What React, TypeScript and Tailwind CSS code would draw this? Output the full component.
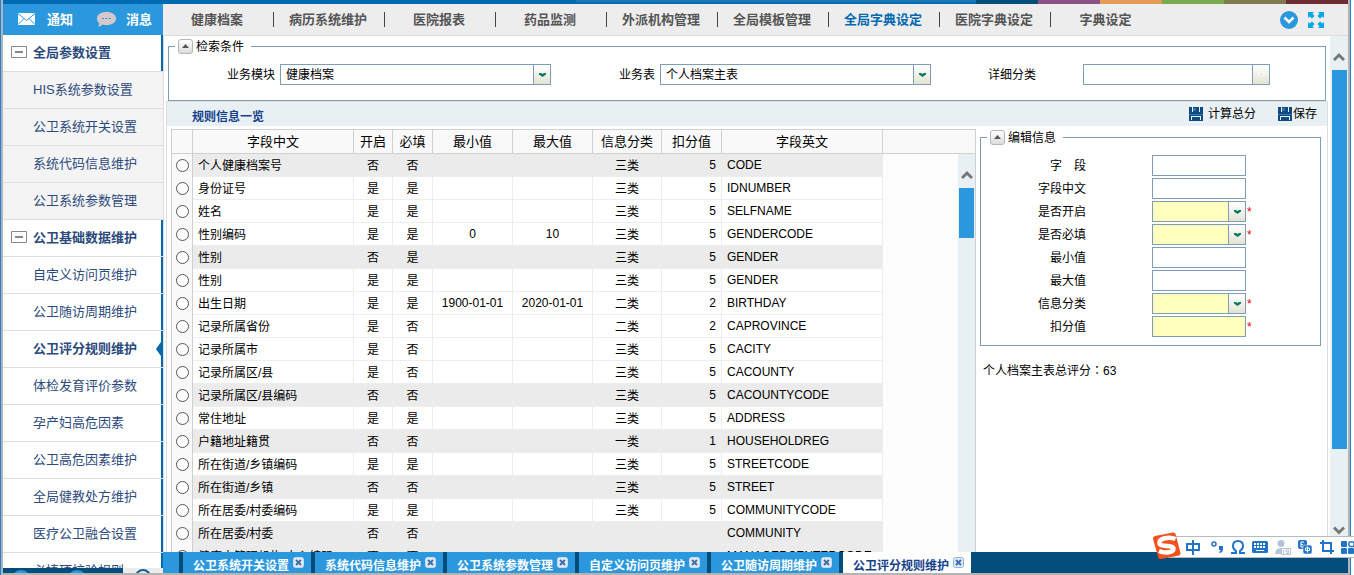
import { useState } from 'react';
import type { ReactNode } from 'react';

interface RuleRow {
  name: string;
  open: string;
  required: string;
  min?: string;
  max?: string;
  kind: string;
  score: string;
  code: string;
}

interface MenuItem {
  label: string;
  group?: boolean;
  light?: boolean;
  active?: boolean;
}

const rows: RuleRow[] = [
  { name: '个人健康档案号', open: '否', required: '否', kind: '三类', score: '5', code: 'CODE' },
  { name: '身份证号', open: '是', required: '是', kind: '三类', score: '5', code: 'IDNUMBER' },
  { name: '姓名', open: '是', required: '是', kind: '三类', score: '5', code: 'SELFNAME' },
  { name: '性别编码', open: '是', required: '是', min: '0', max: '10', kind: '三类', score: '5', code: 'GENDERCODE' },
  { name: '性别', open: '否', required: '是', kind: '三类', score: '5', code: 'GENDER' },
  { name: '性别', open: '是', required: '是', kind: '三类', score: '5', code: 'GENDER' },
  { name: '出生日期', open: '是', required: '是', min: '1900-01-01', max: '2020-01-01', kind: '二类', score: '2', code: 'BIRTHDAY' },
  { name: '记录所属省份', open: '是', required: '否', kind: '二类', score: '2', code: 'CAPROVINCE' },
  { name: '记录所属市', open: '是', required: '否', kind: '三类', score: '5', code: 'CACITY' },
  { name: '记录所属区/县', open: '是', required: '否', kind: '三类', score: '5', code: 'CACOUNTY' },
  { name: '记录所属区/县编码', open: '否', required: '否', kind: '三类', score: '5', code: 'CACOUNTYCODE' },
  { name: '常住地址', open: '是', required: '是', kind: '三类', score: '5', code: 'ADDRESS' },
  { name: '户籍地址籍贯', open: '否', required: '否', kind: '一类', score: '1', code: 'HOUSEHOLDREG' },
  { name: '所在街道/乡镇编码', open: '是', required: '是', kind: '三类', score: '5', code: 'STREETCODE' },
  { name: '所在街道/乡镇', open: '否', required: '否', kind: '三类', score: '5', code: 'STREET' },
  { name: '所在居委/村委编码', open: '是', required: '是', kind: '三类', score: '5', code: 'COMMUNITYCODE' },
  { name: '所在居委/村委', open: '否', required: '否', kind: '', score: '', code: 'COMMUNITY' },
  { name: '健康支管理机构/中心编码', open: '否', required: '否', kind: '', score: '', code: 'MANAGERCENTERCODE' },
];

const menu: MenuItem[] = [
  { label: '全局参数设置', group: true },
  { label: 'HIS系统参数设置', light: true },
  { label: '公卫系统开关设置', light: true },
  { label: '系统代码信息维护', light: true },
  { label: '公卫系统参数管理', light: true },
  { label: '公卫基础数据维护', group: true },
  { label: '自定义访问页维护' },
  { label: '公卫随访周期维护' },
  { label: '公卫评分规则维护', active: true },
  { label: '体检发育评价参数' },
  { label: '孕产妇高危因素' },
  { label: '公卫高危因素维护' },
  { label: '全局健教处方维护' },
  { label: '医疗公卫融合设置' },
  { label: '必填项校验规则' },
];

const navs = [
  '健康档案',
  '病历系统维护',
  '医院报表',
  '药品监测',
  '外派机构管理',
  '全局模板管理',
  '全局字典设定',
  '医院字典设定',
  '字典设定',
];

const tabs = [
  '公卫系统开关设置',
  '系统代码信息维护',
  '公卫系统参数管理',
  '自定义访问页维护',
  '公卫随访周期维护',
  '公卫评分规则维护',
];

const fields = [
  { id: 'field', label: '字　段' },
  { id: 'fieldCn', label: '字段中文' },
  { id: 'open', label: '是否开启', select: true, must: true },
  { id: 'required', label: '是否必填', select: true, must: true },
  { id: 'min', label: '最小值' },
  { id: 'max', label: '最大值' },
  { id: 'kind', label: '信息分类', select: true, must: true },
  { id: 'score', label: '扣分值', must: true },
];

const Combo = (props: {
  id: string;
  value?: string;
  className: string;
  disabled?: boolean;
}) => (
  <div className={`relative h-[21px] border border-[#7f9db9] ${props.className}`}>
    <select
      id={props.id}
      disabled={props.disabled}
      className="block h-full w-full appearance-none bg-transparent pl-[5px] pr-5 pt-0.5 text-xs leading-[17px] text-black outline-none"
    >
      <option>{props.value ?? ''}</option>
    </select>
    <span className="pointer-events-none absolute inset-y-0 right-0 flex w-[17px] items-center justify-center border-l border-[#7f9db9] bg-gradient-to-b from-white to-[#e3e3d3]">
      {props.disabled ? (
        <svg width="9" height="6" viewBox="0 0 9 6" fill="#e6e4d4" stroke="#fff">
          <path d="M1 1h7L4.500 4.500z" />
        </svg>
      ) : (
        <svg width="7" height="4" viewBox="0 0 7 4" fill="#007a66">
          <path d="M0 0h2l1.500 1L5 0h2v1.500L3.500 4 0 1.500z" />
        </svg>
      )}
    </span>
  </div>
);

const PanelLegend = (props: { children: ReactNode }) => (
  <legend className="ml-1.5 px-[3px]">
    <span className="flex h-4 items-center gap-[3px] pr-1">
      <button
        type="button"
        aria-label="收起"
        className="flex h-[15px] w-[15px] items-center justify-center rounded-[3px] border border-[#b5b5b5] bg-gradient-to-b from-white to-[#dcdcdc]"
      >
        <svg width="7" height="4" viewBox="0 0 7 4" fill="#555">
          <path d="M3.500 0L7 4H0z" />
        </svg>
      </button>
      <span className="pt-0.5">{props.children}</span>
    </span>
  </legend>
);

const SaveIcon = () => (
  <svg width="14" height="14" viewBox="0 0 14 14">
    <path d="M0 0h14v14H0z" fill="#0f4a80" />
    <path d="M3 0h1v5H3zM10 0h1v5h-1z" fill="#e8f0f3" />
    <path d="M4 1h3v3H4z" fill="#2d78b4" />
    <path d="M0 7h14v1H0z" fill="#3d76a5" />
    <path d="M2 9h10v1H2zM2 10h1v3H2zM11 10h1v3h-1z" fill="#e8f0f3" />
  </svg>
);

const Arrow = (props: { down?: boolean }) => (
  <svg width="12" height="10" viewBox="0 0 12 10" fill="none" stroke="#777" strokeWidth="3">
    <path d={props.down ? 'M1 1.500l5 5 5-5' : 'M1 8l5-5 5 5'} />
  </svg>
);

const Sidebar = () => (
  <aside className="flex w-40 shrink-0 flex-col">
    <div className="flex h-[31px] shrink-0 items-center bg-[#2b98dd] text-[13px] font-bold text-white">
      <button type="button" className="flex items-center gap-3 pl-[15px]">
        <svg width="17" height="12" viewBox="0 0 17 12">
          <path d="M0 0h17v12H0z" fill="#fff" />
          <path d="M0 .5l8.500 7 8.500-7M0 11.500l6-6M17 11.500l-6-6" fill="none" stroke="#2b98dd" />
        </svg>
        通知
      </button>
      <button type="button" className="flex items-center gap-2.5 pl-6">
        <svg width="19" height="15" viewBox="0 0 19 15">
          <path d="M9.500 0C15 0 19 2.500 19 6.500S15 13 10 13c-2 0-3-.3-4.500-.6-1 1.100-2.500 2-4.500 2.400.9-1.200 1.300-2.400 1.100-3.600C.8 10 0 8.500 0 6.500 0 2.500 4 0 9.500 0z" fill="#d5c8cb" />
          <path d="M5 6h2v1H5zM8.500 6h2v1h-2zM12 6h2v1h-2z" fill="#2b98dd" />
        </svg>
        消息
      </button>
    </div>
    <nav className="min-h-0 flex-1 overflow-hidden">
      {menu.map((item) => (
        <a
          key={item.label}
          href="#"
          className={`relative flex h-[37px] items-center border-b border-[#ddd] text-[13px] text-[#2d4a7c] ${
            item.light ? 'bg-[#f4f4f4]' : 'bg-white'
          } ${item.group || item.active ? 'font-bold' : ''}`}
        >
          <span className="flex w-[30px] shrink-0 pb-0.5 pl-2">
            {item.group && (
              <svg width="16" height="12" viewBox="0 0 16 12">
                <path d="M.5.5h15v11H.5z" fill="none" stroke="#888" />
                <path d="M4 5h8v2H4z" fill="#888" />
              </svg>
            )}
          </span>
          <span className="flex-1 whitespace-nowrap">{item.label}</span>
          {!item.light && <span className="h-full w-0.5 bg-[#0069b0]" />}
          {item.active && (
            <svg className="absolute right-0 top-2" width="7" height="20" viewBox="0 0 7 20">
              <path d="M7 0v20L0 10z" fill="#0069b0" />
            </svg>
          )}
        </a>
      ))}
    </nav>
    <div className="flex h-[5px] shrink-0 overflow-hidden bg-[#ececec]">
      <div className="flex w-[120px] items-start gap-9 bg-[#024d7c] pl-2">
        <span className="mt-0.5 h-5 w-5 rounded-full bg-[#2b98dd]" />
        <span className="mt-0.5 h-5 w-5 rounded-full bg-[#2b98dd]" />
      </div>
      <span className="ml-3 mt-px h-4 w-4 rounded-full border-2 border-[#1b5c8c]" />
    </div>
  </aside>
);

const TopNav = () => (
  <nav className="flex h-8 shrink-0 items-center border-b border-[#ddd] bg-[#ededed]">
    {navs.map((nav, i) => (
      <a
        key={nav}
        href="#"
        className={`flex h-[15px] w-[111px] items-center justify-center whitespace-nowrap pr-0.5 text-[13px] font-bold ${
          i < navs.length - 1 ? 'border-r border-[#444]' : ''
        } ${nav === '全局字典设定' ? 'text-[#0069b0]' : 'text-[#555]'}`}
      >
        {nav}
      </a>
    ))}
    <div className="ml-auto flex items-center gap-2.5 pr-6">
      <button type="button" aria-label="展开">
        <svg className="block" width="18" height="18" viewBox="0 0 18 18">
          <circle cx="9" cy="9" r="9" fill="#2b98dd" />
          <path d="M4.500 6.500L9 11l4.500-4.500" fill="none" stroke="#fff" strokeWidth="2.500" />
        </svg>
      </button>
      <button type="button" aria-label="全屏">
        <svg className="block" width="16" height="16" viewBox="0 0 16 16">
          <path
            d="M0 0h6L4.500 1.500 6.500 4 4 6.500 1.500 4.500 0 6zM16 0v6l-1.500-1.500L12 6.500 9.500 4l2-2.500L10 0zM0 16v-6l1.500 1.500L4 9.500 6.500 12l-2 2.500L6 16zM16 16h-6l1.500-1.500-2-2.500L12 9.500l2.500 2L16 10z"
            fill="#00a8ec"
          />
        </svg>
      </button>
    </div>
  </nav>
);

const SearchPanel = () => (
  <fieldset className="ml-[5px] mr-1 mt-0.5 h-[63px] min-w-0 border border-[#7f9db9]">
    <PanelLegend>检索条件</PanelLegend>
    <div className="flex items-center pt-2.5">
      <label htmlFor="module" className="w-[106px] shrink-0 text-right">
        业务模块
      </label>
      <Combo id="module" value="健康档案" className="ml-[5px] w-[271px]" />
      <label htmlFor="sheet" className="w-[104px] shrink-0 text-right">
        业务表
      </label>
      <Combo id="sheet" value="个人档案主表" className="ml-[5px] w-[271px]" />
      <label htmlFor="detail" className="w-[105px] shrink-0 text-right">
        详细分类
      </label>
      <Combo id="detail" disabled className="ml-[47px] w-[187px]" />
    </div>
  </fieldset>
);

const RuleTable = () => {
  const [selected, setSelected] = useState<number | null>(null);
  const head = 'border-r border-[#d0d0d0] p-0 font-normal';
  const cell = 'border-r border-b border-[#ededed] p-0';

  return (
    <div className="relative min-w-0 flex-1 overflow-hidden border-x border-t border-[#d0d0d0] bg-[#fdfdfd]">
      <table className="w-full table-fixed border-separate border-spacing-0 text-center">
        <colgroup>
          <col className="w-[21px]" />
          <col className="w-[161px]" />
          <col className="w-[39px]" />
          <col className="w-10" />
          <col className="w-20" />
          <col className="w-20" />
          <col className="w-[69px]" />
          <col className="w-[60px]" />
          <col className="w-[161px]" />
          <col />
        </colgroup>
        <thead>
          <tr className="h-6 bg-[#f9f9f9] text-[13px]">
            <th className={`${head} border-b`} />
            <th className={`${head} border-b`}>字段中文</th>
            <th className={`${head} border-b`}>开启</th>
            <th className={`${head} border-b`}>必填</th>
            <th className={`${head} border-b`}>最小值</th>
            <th className={`${head} border-b`}>最大值</th>
            <th className={`${head} border-b`}>信息分类</th>
            <th className={`${head} border-b`}>扣分值</th>
            <th className={`${head} border-b`}>字段英文</th>
            <th className="border-b border-[#d0d0d0] p-0" />
          </tr>
        </thead>
        <tbody>
          {rows.map((row, i) => (
            <tr key={i} className={`h-[23px] ${row.open === '否' ? 'bg-[#ebebeb]' : 'bg-white'}`}>
              <td className="border-r border-[#d0d0d0] bg-[#f9f9f9] p-0">
                <input
                  type="radio"
                  name="rule"
                  aria-label={row.name}
                  checked={selected === i}
                  onChange={() => setSelected(i)}
                  className="mx-auto block h-[13px] w-[13px] appearance-none rounded-full border border-[#555] bg-white checked:bg-[#2b98dd]"
                />
              </td>
              <td className={`${cell} overflow-hidden whitespace-nowrap pl-[5px] pt-0.5 text-left`}>
                {row.name}
              </td>
              <td className={`${cell} pt-0.5`}>{row.open}</td>
              <td className={`${cell} pt-0.5`}>{row.required}</td>
              <td className={cell}>{row.min}</td>
              <td className={cell}>{row.max}</td>
              <td className={`${cell} pt-0.5`}>{row.kind}</td>
              <td className={`${cell} pr-[5px] text-right`}>{row.score}</td>
              <td className={`${cell} pl-[5px] text-left`}>{row.code}</td>
              <td className="bg-[#fdfdfd] p-0" />
            </tr>
          ))}
        </tbody>
      </table>
      <div className="absolute bottom-0 right-0 top-6 flex w-[17px] flex-col items-center bg-[#e8f0f3] pt-4">
        <Arrow />
        <div className="mt-2 h-[50px] w-[15px] bg-[#2b98dd]" />
      </div>
    </div>
  );
};

const EditPanel = () => (
  <div className="w-[351px] shrink-0 pl-1 pr-1.5">
    <fieldset className="h-[217px] min-w-0 border border-[#7f9db9]">
      <PanelLegend>编辑信息</PanelLegend>
      <div className="flex flex-col gap-0.5 pt-2.5">
        {fields.map((field) => (
          <div key={field.id} className="flex h-[21px] items-center">
            <label htmlFor={field.id} className="w-[105px] shrink-0 text-right">
              {field.label}
            </label>
            {field.select ? (
              <Combo id={field.id} className="ml-[66px] w-[94px] bg-[#ffffbe]" />
            ) : (
              <input
                id={field.id}
                type="text"
                className={`ml-[66px] h-[21px] w-[94px] border border-[#7f9db9] px-1 outline-none ${
                  field.must ? 'bg-[#ffffbe]' : 'bg-white'
                }`}
              />
            )}
            {field.must && <span className="ml-px text-red-600">*</span>}
          </div>
        ))}
      </div>
    </fieldset>
    <p className="mt-[17px] pl-[3px] leading-4">
      个人档案主表总评分<span className="font-['Noto_Sans_CJK_TC',sans-serif] leading-none">：</span>63
    </p>
  </div>
);

const BottomTabs = () => (
  <div className="flex h-[21px] shrink-0 gap-1 bg-[#024d7c]">
    <span className="w-4 bg-[#2b98dd]" />
    {tabs.map((tab, i) => {
      const active = i === tabs.length - 1;
      return (
        <div
          key={tab}
          className={`flex w-32 items-center gap-1 pl-2.5 font-bold ${
            active ? 'bg-white text-[#15428b]' : 'bg-[#2b98dd] text-white'
          }`}
        >
          <a href="#" className="whitespace-nowrap pt-1.5">
            {tab}
          </a>
          <button type="button" aria-label={`关闭${tab}`}>
            <svg className="block" width="11" height="11" viewBox="0 0 11 11">
              <rect x=".5" y=".5" width="10" height="10" rx="2" fill="#dfeaf6" stroke={active ? '#8fb4dc' : '#c4dcf2'} />
              <path d="M3 3l5 5M8 3L3 8" stroke="#3f6ea8" strokeWidth="2" />
            </svg>
          </button>
        </div>
      );
    })}
  </div>
);

// floating input method bar, sits over the lower right corner
const ImeBar = () => (
  <div className="absolute right-0 top-[532px] flex h-7 w-[202px] items-center">
    <div className="absolute bottom-0.5 left-4 right-0 top-1 border-y border-[#b4bcc4] bg-white" />
    <svg className="relative shrink-0" width="30" height="28" viewBox="0 0 30 28">
      <path d="M3 4L21 .5q2-.3 2.500 1.500L28.500 21q.3 2-1.500 2.500L9 27q-2 .4-2.700-1.500L1 7q-.3-2.500 2-3z" fill="#f4511e" />
      <path
        d="M23.500 7C17 4 6.500 6.500 7.500 11.500c.8 4 14 1.200 14 5.200 0 3.800-8 4.800-14.500 2.300"
        fill="none"
        stroke="#fff"
        strokeWidth="4.500"
      />
    </svg>
    <div className="relative flex flex-1 items-center justify-between pl-1 pt-0.5 text-[#2174c7]">
      <svg width="14" height="15" viewBox="0 0 14 15" fill="none" stroke="currentColor" strokeWidth="2">
        <path d="M1 4h12v6H1zM7 0v15" />
      </svg>
      <svg className="ml-1" width="12" height="12" viewBox="0 0 12 12">
        <circle cx="3" cy="3" r="2" fill="none" stroke="currentColor" strokeWidth="1.500" />
        <path d="M8 5h4v3q0 3-3 4l-1-1q2-1 1.500-2H8z" fill="currentColor" />
      </svg>
      <svg width="14" height="14" viewBox="0 0 14 14" fill="none" stroke="currentColor" strokeWidth="2">
        <path d="M0 13h5v-2Q2 9 2 6q0-5 5-5t5 5q0 3-3 5v2h5" />
      </svg>
      <svg width="16" height="12" viewBox="0 0 16 12">
        <rect width="16" height="12" rx="1.500" fill="currentColor" />
        <path d="M2 3h12M2 6h12" stroke="#fff" strokeWidth="2" strokeDasharray="2 1" />
        <path d="M4 9.500h8" stroke="#fff" />
      </svg>
      <svg width="16" height="15" viewBox="0 0 16 15" fill="#b7c3da">
        <circle cx="6" cy="3.500" r="3.500" />
        <path d="M0 14q0-6 6-6v6z" />
        <path d="M6.500 8.500h9v6h-9z" fill="#fff" stroke="#b7c3da" />
        <path d="M8.500 10v4M11 10h2.500v3.500H11M11 10v2h2.500" fill="none" stroke="#b7c3da" />
      </svg>
      <svg width="14" height="14" viewBox="0 0 14 14">
        <rect width="9" height="9" rx="2" fill="currentColor" />
        <rect x="5" y="5" width="9" height="9" rx="2" fill="currentColor" stroke="#fff" strokeWidth=".5" />
        <path d="M6 2H3v5h2M3 4.500h2M7.500 8h4v2.500h-4zM9.500 6.500v6" fill="none" stroke="#fff" />
      </svg>
      <svg width="14" height="14" viewBox="0 0 14 14" fill="none" stroke="currentColor" strokeWidth="2">
        <path d="M3 0v11h11M0 3h11v11" />
      </svg>
      <svg width="13" height="13" viewBox="0 0 13 13" fill="currentColor">
        <rect width="6" height="6" rx="1" />
        <rect x="8" y="1" width="5" height="4.500" rx="1" fill="none" stroke="currentColor" strokeWidth="1.500" />
        <rect y="7" width="6" height="6" rx="1" />
        <rect x="7" y="7" width="6" height="6" rx="1" />
      </svg>
    </div>
  </div>
);

export default function App() {
  return (
    <div className="relative flex h-screen overflow-hidden bg-white font-['Liberation_Sans','Noto_Sans_CJK_SC',sans-serif] text-xs text-black">
      <div className="mr-[3px] flex min-w-0 flex-1 flex-col border-x border-[#1f80d8]">
        <div className="flex min-h-0 flex-1 flex-col border-b-2 border-l-2 border-r-2 border-[#b4b4b4]">
          <div className="flex h-1 shrink-0 bg-[#006bb1]">
            <span className="flex-1" />
            <span className="h-0.5 w-[400px] bg-[#1a7ab8]" />
            <span className="w-[62px] bg-[#024d7c]" />
            <span className="w-[62px] bg-[#8b5286]" />
            <span className="w-[62px] bg-[#e49c54]" />
            <span className="w-[62px] bg-[#7aab4f]" />
            <span className="w-[62px] bg-[#7f7b50]" />
            <span className="w-[62px] bg-[#6f2c30]" />
          </div>
          <div className="flex min-h-0 flex-1">
            <Sidebar />
            <main className="flex min-w-0 flex-1 flex-col">
              <TopNav />
              <div className="flex min-h-0 flex-1 border-l border-[#ddd]">
                <div className="-ml-px flex min-w-0 flex-1 flex-col">
                  <SearchPanel />
                  <div className="ml-[3px] mr-0.5 flex min-h-0 flex-1 flex-col border-x border-t border-[#ddd]">
                    <div className="flex h-6 shrink-0 items-center bg-[#e8f0f3] pl-[25px] pr-2.5">
                      <h2 className="mr-auto pt-1.5 font-bold text-[#15428b]">规则信息一览</h2>
                      <button type="button" className="flex items-center gap-[5px]">
                        <SaveIcon />
                        计算总分
                      </button>
                      <button type="button" className="ml-[22px] flex items-center gap-px">
                        <SaveIcon />
                        保存
                      </button>
                    </div>
                    <div className="flex min-h-0 flex-1 pl-1 pt-[3px]">
                      <RuleTable />
                      <EditPanel />
                    </div>
                  </div>
                </div>
                <div className="flex w-[18px] shrink-0 flex-col items-center bg-[#e8f0f3] pb-4 pt-4">
                  <Arrow />
                  <div className="mt-2 h-[379px] w-[15px] bg-[#2b98dd]" />
                  <span className="mt-auto">
                    <Arrow down />
                  </span>
                </div>
              </div>
              <BottomTabs />
            </main>
          </div>
        </div>
      </div>
      <ImeBar />
    </div>
  );
}
